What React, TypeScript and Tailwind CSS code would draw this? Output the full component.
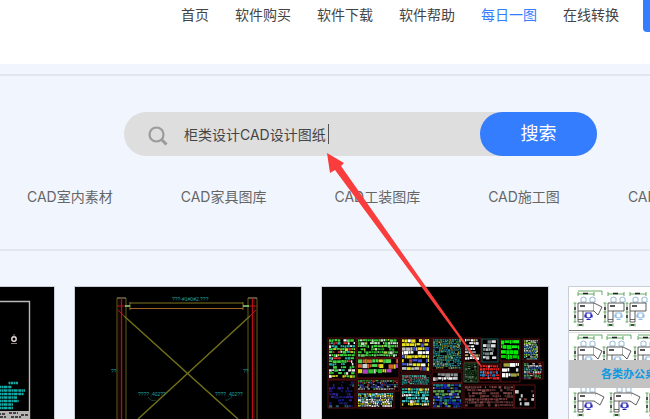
import React from 'react';
import clsx from 'clsx';

const NAV_ITEMS = ['首页', '软件购买', '软件下载', '软件帮助', '每日一图', '在线转换'];
const ACTIVE_ITEM = '每日一图';

const CATEGORIES = ['CAD室内素材', 'CAD家具图库', 'CAD工装图库', 'CAD施工图', 'CAD机械图纸'];

interface Block {
  x: number;
  y: number;
  w: number;
  h: number;
  colors: string[];
  row?: number;
  density?: number;
  frame?: string;
}

const MIXED = ['#3fd23f', '#e8e8e8', '#d8d820', '#c83030', '#20b0a0', '#ffffff', '#3fd23f'];
const TEAL = ['#209090', '#50a060', '#a09830', '#3080a0', '#80b0a0'];

const BLOCKS: Block[] = [
  { x: 6, y: 51, w: 28, h: 41, colors: MIXED, row: 3 },
  { x: 35, y: 51, w: 42, h: 20, colors: ['#30d030', '#20a020', '#60d060', '#b0d040', '#c0e0c0'], row: 3 },
  { x: 35, y: 71, w: 42, h: 20, colors: ['#30c030', '#50d850', '#d0d0d0', '#d06030', '#b040c0', '#d8d820'], row: 5 },
  { x: 35, y: 92, w: 42, h: 12, colors: ['#40a040', '#a03030', '#a0a0a0', '#3040a0'], row: 2 },
  { x: 35, y: 105, w: 37, h: 16, colors: ['#ffffff', '#50c8c8', '#d8d820', '#909090', '#3060c0'], row: 2, density: 0.95 },
  { x: 6, y: 93, w: 27, h: 28, colors: ['#101880', '#181860', '#206070', '#302090'], row: 3, density: 0.6 },
  { x: 79, y: 51, w: 29, h: 34, colors: ['#e8e020', '#ffffff', '#e8e020', '#4050d0', '#c0c0c0', '#b04040'], row: 4 },
  { x: 79, y: 87, w: 29, h: 11, colors: ['#30a8a0', '#50b0a0', '#208080', '#a06060'], row: 2, density: 0.95 },
  { x: 79, y: 100, w: 29, h: 21, colors: ['#d8d040', '#f0f0f0', '#30a8a8', '#40c8c0'], row: 3 },
  { x: 110, y: 51, w: 30, h: 32, colors: TEAL, row: 2, density: 0.95 },
  { x: 110, y: 85, w: 30, h: 11, colors: ['#ffffff', '#c8c8c8', '#909090'], row: 4, density: 0.75 },
  { x: 110, y: 96, w: 30, h: 25, colors: ['#1828a0', '#2030c0', '#60a050', '#208080', '#a0a0c0'], row: 3 },
  { x: 142, y: 51, w: 17, h: 24, colors: ['#e0e0e0', '#909090', '#ffffff', '#b0a050'], row: 3, density: 0.8 },
  { x: 160, y: 52, w: 16, h: 23, colors: ['#708080', '#b0b8b8', '#e0e0e0'], row: 4, density: 0.7, frame: '#308080' },
  { x: 178, y: 52, w: 20, h: 22, colors: ['#00e800', '#00d000', '#10f010'], row: 5, density: 0.95 },
  { x: 201, y: 52, w: 16, h: 21, colors: ['#50c0a0', '#4080d0', '#90d040', '#c0d0c0'], row: 2, density: 0.95 },
  { x: 142, y: 76, w: 14, h: 19, colors: ['#205020', '#306830', '#183818', '#708070'], row: 2, density: 0.9, frame: '#508050' },
  { x: 157, y: 77, w: 21, h: 18, colors: ['#e02020', '#f03030', '#c01818', '#e02020', '#d09090', '#3080c0'], row: 3, density: 1 },
  { x: 179, y: 75, w: 19, h: 20, colors: ['#ffffff', '#e0e0e0', '#ffffff', '#a0a040'], row: 5, density: 0.85 },
  { x: 201, y: 75, w: 20, h: 17, colors: ['#40b0a0', '#d0d0d0', '#4060b0', '#50a050', '#c04040'], row: 2, density: 0.9 },
  { x: 142, y: 98, w: 50, h: 23, colors: ['#703838', '#804848', '#502828', '#603030'], row: 3, density: 0.75 },
  { x: 192, y: 98, w: 21, h: 23, colors: ['#704040', '#c8c8c8', '#503030'], row: 4, density: 0.4 },
];

// small deterministic generator, so the drawing is the same on each render
const createRandom = (seed: number) => {
  let value = seed;
  return () => {
    value = (value * 16807) % 2147483647;
    return value / 2147483647;
  };
};

const SymbolBlock: React.FC<{ block: Block; seed: number }> = ({ block, seed }) => {
  const random = createRandom(seed * 7919 + 13);
  const row = block.row || 3;
  const density = block.density || 0.88;
  const marks: React.ReactNode[] = [];

  for (let y = block.y + 1; y + row - 1 < block.y + block.h; y += row) {
    const rowColor = block.colors[Math.floor(random() * block.colors.length)];
    let x = block.x + 1;
    while (x < block.x + block.w - 2) {
      const w = Math.min(1 + random() * row, block.x + block.w - 1 - x);
      if (random() < density) {
        const color = random() < 0.5 ? rowColor : block.colors[Math.floor(random() * block.colors.length)];
        marks.push(
          <rect key={`${x}-${y}`} x={x} y={y + random() * 0.4} width={w} height={row * (0.55 + random() * 0.35)} fill={color} />
        );
      }
      x += w + 0.4;
    }
  }

  return (
    <g>
      {marks}
      <rect x={block.x} y={block.y} width={block.w} height={block.h} fill="none" stroke={block.frame || '#801818'} strokeWidth="0.7" />
    </g>
  );
};

const SheetDrawing = () => {
  const random = createRandom(4211);
  return (
    <svg viewBox="0 0 226 132" className="block w-full bg-black" aria-hidden="true">
      <path d="M0 14.5H201.5V132" fill="none" stroke="#b8b8b8" strokeWidth="1.4" />
      <circle cx="186" cy="52" r="2.2" fill="none" stroke="#f0e0e0" strokeWidth="1.4" />
      <path d="M186 47v3M183 56.5h6" stroke="#a0a0a0" strokeWidth="0.8" />
      <path d="M180.5 96h10" stroke="#12a8a0" strokeWidth="2.6" strokeDasharray="2 0.5" />
      {[100, 103.5, 107, 110.5, 114, 117.5, 121].map((y) => (
        <path
          key={y}
          d={`M160 ${y}H${Math.round(184 + random() * 14)}`}
          stroke="#0eaca8"
          strokeWidth="2.5"
          strokeDasharray="3 0.5 1.5 0.4 4 0.7"
        />
      ))}
      <rect x="160" y="124" width="41" height="8" fill="#b8b4b4" />
      <path d="M170 127h8M181 126h9M193 128h7M172 130h6M183 130h10" stroke="#1c1c1c" strokeWidth="1.3" strokeDasharray="3 1" />
    </svg>
  );
};

const FrameDrawing = () => (
  <svg viewBox="0 0 226 132" className="block w-full bg-black" aria-hidden="true">
    <g fill="none" strokeWidth="0.9">
      <path d="M42 132V11h9v121M173 132V11h9v121" stroke="#6c6a14" />
      <path d="M42 11h9M173 11h9" stroke="#808080" />
      <path d="M44 12v120M179.5 12v120" stroke="#501010" strokeWidth="0.6" />
      <path d="M46.5 11v121M177.5 11v121" stroke="#b01018" strokeWidth="1.4" />
      <path d="M42 19h9M173 19h9M43 23l6 6M181 23l-6 6" stroke="#c01820" />
      <path d="M55 16h113M55 15v8M168 15v8" stroke="#8c8420" />
      <path d="M55 21.5h113" stroke="#a06420" strokeWidth="1.2" />
      <path d="M50 19h5M168 19h6" stroke="#90d880" strokeWidth="1.6" />
      <path d="M49 29L163 132M175 29L63 132" stroke="#706e18" strokeWidth="1.5" />
      <path d="M73 110q3 5 8 3M150 113q5 1 7-5" stroke="#186060" strokeWidth="0.7" />
    </g>
    <g fill="#20a0a0" fontFamily="Liberation Sans, sans-serif" fontSize="5">
      <text x="97" y="14">???-#1#0#2.???</text>
      <text x="36" y="86">??</text>
      <text x="168" y="86">??</text>
      <text x="63" y="109">???? ,402??</text>
      <text x="140" y="109">???? ,402??</text>
    </g>
  </svg>
);

const LibraryDrawing = () => (
  <svg viewBox="0 0 226 132" className="block w-full bg-black" aria-hidden="true">
    {BLOCKS.map((block, index) => (
      <SymbolBlock key={index} block={block} seed={index + 1} />
    ))}
  </svg>
);

const NAVY = '#2424b8';
const SKY = '#90bce4';

const Desk: React.FC<{ x: number; y: number; wing?: boolean; wide?: boolean; seat?: string }> = ({ x, y, wing, wide, seat = NAVY }) => {
  const w = wide ? 18 : 16;
  return (
    <g transform={`translate(${x} ${y})`} fill="none" strokeWidth="0.8">
      <path d={`M0-9h${w}M0-11v4M${w}-11v4M-3 0v19M-4.5 0h3M-4.5 9h3M-4.5 19h3M0 22h5M0 20.5v3M5 20.5v3`} stroke="#3f963f" />
      <path d="M5-9.5h5M-3 4v3M-3 12v3M1 22h3" stroke="#222" strokeWidth="1.4" />
      {wing && <path d="M0-12h24v4" stroke="#3f963f" />}
      <path d="M3-1v-4q2.500-2 5 0v4zM12-1v-4q2.500-2 5 0v4z" stroke="#7fa8cc" />
      <path d={`M0 0H${w}V8H5V19H0Z`} stroke="#333" fill="#fff" />
      <path d="M0 8h5M0 16.500h5" stroke="#444" />
      {wing && <path d={`M${w} 0l8 4-4 8-${w - 12}-4`} stroke="#333" fill="#fff" />}
      <path d="M2 3h5" stroke="#111" strokeWidth="1.4" />
      <path d="M8 10h5v4q-2.500 2-5 0zM7 11.500v3M14 11.500v3M8.500 16.500h4" stroke={seat} strokeWidth="1.2" />
    </g>
  );
};

const DeskDrawing = () => (
  <svg viewBox="0 0 226 132" className="block w-full bg-white" aria-hidden="true">
    <Desk x={9} y={16} wing />
    {[39, 61, 91, 121, 151, 181].map((x) => (
      <Desk key={x} x={x} y={16} seat={SKY} />
    ))}
    <path d="M0 43.500h226" stroke="#777" strokeWidth="1.2" />
    <path d="M0 45.500h226" stroke="#ccc" strokeWidth="0.6" />
    {[9, 38, 69, 100, 131, 162, 193].map((x) => (
      <Desk key={x} x={x} y={60} wing seat={SKY} />
    ))}
    {[9, 45, 81, 117, 153, 189].map((x) => (
      <Desk key={x} x={x} y={106} wing wide />
    ))}
  </svg>
);

const CARDS = [
  { id: 'sheet', drawing: <SheetDrawing /> },
  { id: 'frame', drawing: <FrameDrawing /> },
  { id: 'library', drawing: <LibraryDrawing /> },
  { id: 'desk', drawing: <DeskDrawing />, caption: '各类办公桌' },
];

const Header = () => (
  <header className="flex h-16 items-start bg-white pl-[181px]">
    <nav className="flex shrink-0 gap-[26px] pt-[3px] text-sm leading-6">
      {NAV_ITEMS.map((item) => (
        <a
          key={item}
          href="#"
          className={clsx('whitespace-nowrap', item === ACTIVE_ITEM ? 'text-[#347dfe]' : 'text-[#444]')}
        >
          {item}
        </a>
      ))}
    </nav>
    <button type="button" aria-label="下载" className="ml-6 h-8 w-24 shrink-0 rounded-b bg-[#347dfe]" />
  </header>
);

const SearchBar = () => (
  <form className="ml-[124px] flex h-11 w-[473px] rounded-full bg-[#dedede]" onSubmit={(e) => e.preventDefault()}>
    <label htmlFor="search" className="flex w-[60px] shrink-0 items-center pt-1 pl-6" aria-label="搜索图纸">
      <svg viewBox="0 0 20 20" className="h-5 w-5" fill="none" stroke="#9b9b9b" aria-hidden="true">
        <circle cx="8.5" cy="8.5" r="7" strokeWidth="2.2" />
        <path d="M13.5 13.5l5 5" strokeWidth="3" />
      </svg>
    </label>
    <div className="relative min-w-0 grow">
      <input
        id="search"
        type="text"
        defaultValue="柜类设计CAD设计图纸"
        className="h-11 w-full bg-transparent text-sm text-[#444] outline-none"
      />
      <span className="absolute top-3 left-36 h-5 w-px bg-[#555]" />
    </div>
    <button type="submit" className="w-[117px] shrink-0 rounded-full bg-[#347dfe] text-lg text-white">
      搜索
    </button>
  </form>
);

export default function App() {
  return (
    <div className="relative overflow-hidden bg-[#f1f6fe] font-['Inter','Noto_Sans_CJK_SC',sans-serif]">
      <Header />
      <main>
        <section className="mt-[10px] border-y-2 border-[#e1e6ef] pt-9">
          <SearchBar />
          <div className="mt-[29px] flex gap-[68px] pb-10 pl-[27px] text-sm leading-6 text-[#666]">
            {CATEGORIES.map((category) => (
              <a key={category} href="#" className="shrink-0 whitespace-nowrap">
                {category}
              </a>
            ))}
          </div>
        </section>
        <section className="mt-9 -ml-43 flex gap-[21px]">
          {CARDS.map((card) => (
            <a key={card.id} href="#" className="relative block w-[226px] shrink-0 outline outline-[#c9cdd4]">
              {card.drawing}
              {card.caption && (
                <span className="absolute inset-x-0 top-[73px] h-7 bg-[#c3c3c3] pl-8 text-[11px] leading-7 font-bold text-[#0f9ae0]">
                  {card.caption}
                </span>
              )}
            </a>
          ))}
        </section>
      </main>
      {/* arrow pointing at the search text */}
      <svg viewBox="0 0 154 213" className="absolute top-[153px] left-[327px] w-[154px]" aria-hidden="true">
        <path d="M0 0L17 10L14 13L154 212L153 213L8 17L3 20Z" fill="#f93c3c" />
      </svg>
    </div>
  );
}
